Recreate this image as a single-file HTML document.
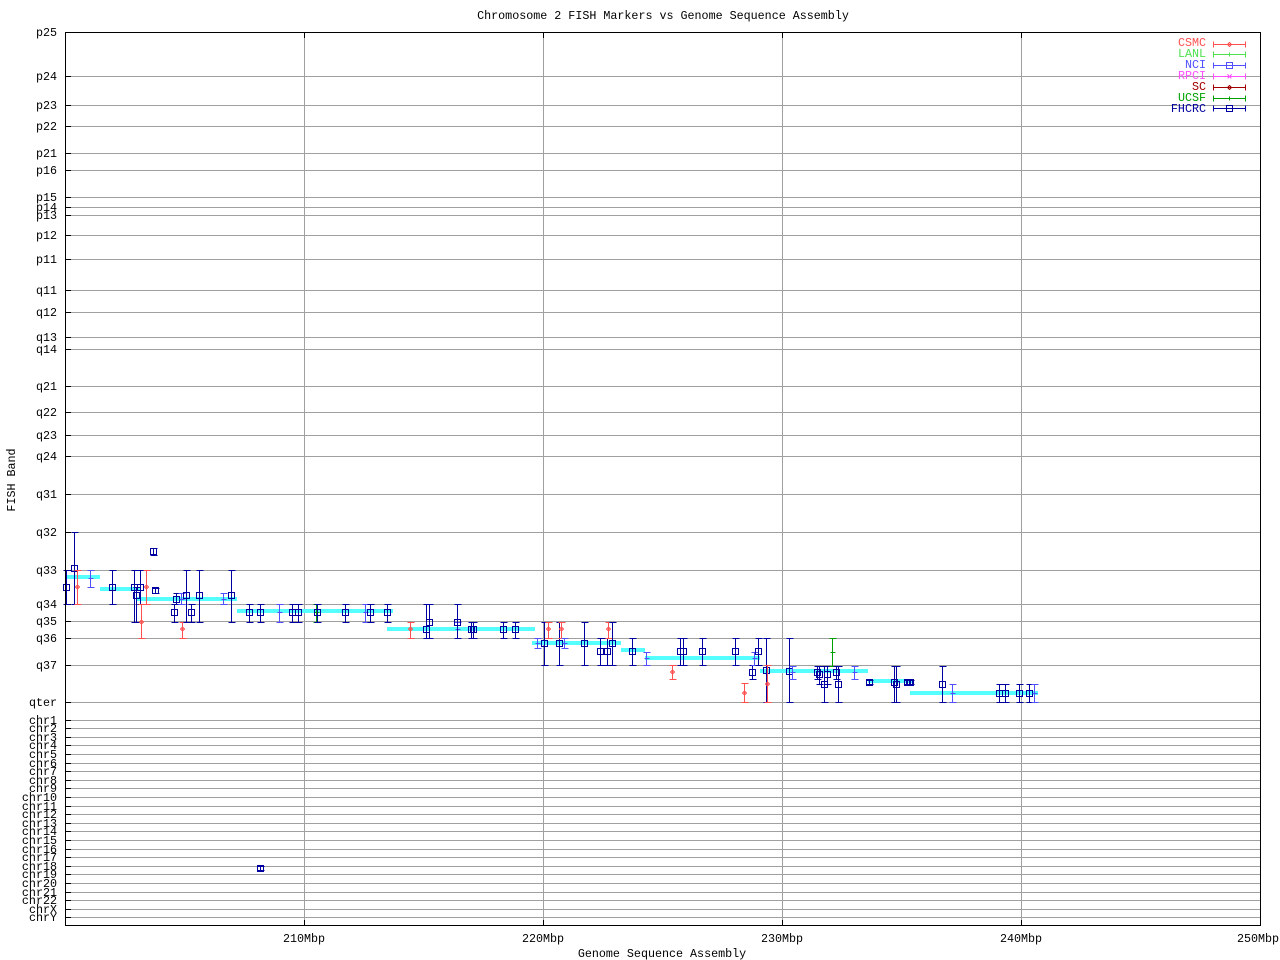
<!DOCTYPE html>
<html><head><meta charset="utf-8"><style>
html,body{margin:0;padding:0;background:#fff;}
svg{display:block;}
text{font-family:"Liberation Mono","DejaVu Sans Mono",monospace;font-size:11.7px;}
</style></head><body>
<svg id="s" width="1280" height="960" xmlns="http://www.w3.org/2000/svg" shape-rendering="crispEdges">
<g id="grid" stroke="#a0a0a0" stroke-width="1"></g>
<g id="ylab" text-anchor="end" fill="#000"></g>
<g id="bars" fill="#55ffff"></g>
<g id="data" fill="none" stroke-width="1"></g>
<rect x="65.5" y="32.5" width="1195" height="893" fill="none" stroke="#000"/>
<text x="663" y="19" text-anchor="middle">Chromosome 2 FISH Markers vs Genome Sequence Assembly</text>
<text x="304" y="942" text-anchor="middle">210Mbp</text>
<text x="543" y="942" text-anchor="middle">220Mbp</text>
<text x="782" y="942" text-anchor="middle">230Mbp</text>
<text x="1021" y="942" text-anchor="middle">240Mbp</text>
<text x="1258" y="942" text-anchor="middle">250Mbp</text>
<text x="662" y="957" text-anchor="middle">Genome Sequence Assembly</text>
<text transform="translate(15,480) rotate(-90)" text-anchor="middle">FISH Band</text>
<g text-anchor="end">
<text x="1206" y="46" fill="#ff5050">CSMC</text>
<text x="1206" y="57" fill="#50e050">LANL</text>
<text x="1206" y="68" fill="#5050ff">NCI</text>
<text x="1206" y="79" fill="#ff50ff">RPCI</text>
<text x="1206" y="90" fill="#a00000">SC</text>
<text x="1206" y="101" fill="#00a000">UCSF</text>
<text x="1206" y="112" fill="#0000a0">FHCRC</text>
</g>
<g id="leg" fill="none"></g>
</svg>
<script>
var NS="http://www.w3.org/2000/svg";
function el(p,t,a){var e=document.createElementNS(NS,t);for(var k in a)e.setAttribute(k,a[k]);document.getElementById(p).appendChild(e);return e;}
var ys=[["p24",76],["p23",105],["p22",126],["p21",153],["p16",170],["p15",197],["p14",207],["p13",215],["p12",235],["p11",259],["q11",290],["q12",312],["q13",337],["q14",349],["q21",386],["q22",412],["q23",435],["q24",456],["q31",494],["q32",532],["q33",570],["q34",604],["q35",621],["q36",638],["q37",665],["qter",702],["chr1",720],["chr2",728],["chr3",737],["chr4",745],["chr5",754],["chr6",763],["chr7",771],["chr8",780],["chr9",788],["chr10",797],["chr11",806],["chr12",814],["chr13",823],["chr14",831],["chr15",840],["chr16",849],["chr17",857],["chr18",866],["chr19",874],["chr20",883],["chr21",892],["chr22",900],["chrX",909],["chrY",917]];
var t=el("ylab","text",{x:57,y:36});t.textContent="p25";
ys.forEach(function(v){el("grid","line",{x1:65,x2:1260,y1:v[1]+.5,y2:v[1]+.5});el("grid","line",{x1:65,x2:71,y1:v[1]+.5,y2:v[1]+.5,stroke:"#000"});var t=el("ylab","text",{x:57,y:v[1]+4});t.textContent=v[0];});
[304,543,782,1021].forEach(function(x){el("grid","line",{x1:x+.5,x2:x+.5,y1:32,y2:926});el("grid","line",{x1:x+.5,x2:x+.5,y1:920,y2:926,stroke:"#000"});el("grid","line",{x1:x+.5,x2:x+.5,y1:32,y2:38,stroke:"#000"});});
[[65,100,577],[100,140,589],[137,237,599],[237,393,611],[387,535,629],[532,621,643],[621,645,650],[645,760,658],[760,868,671],[868,913,681],[910,1038,693]].forEach(function(b){el("bars","rect",{x:b[0],y:b[2]-2,width:b[1]-b[0],height:4});});
var C={b:"#0000a0",r:"#ff5050",l:"#5050ff",g:"#00a000",k:"#a00000"};
var D=[[66,570,587,604,"b"],[74,532,568,604,"b"],[77,570,587,604,"r"],[90,570,578,587,"l"],[112,570,587,604,"b"],[134,570,587,622,"b"],[136,587,595,622,"b"],[140,570,587,604,"b"],[141,604,622,638,"r"],[146,570,587,604,"r"],[153,548,551,555,"b"],[155,588,590,593,"b"],[174,604,612,622,"b"],[176,593,599,604,"b"],[181,593,599,604,"l"],[182,622,629,638,"r"],[186,570,595,622,"b"],[191,604,612,622,"b"],[199,570,595,622,"b"],[223,593,599,604,"l"],[231,570,595,622,"b"],[249,604,612,622,"b"],[260,604,612,622,"b"],[279,604,612,622,"l"],[292,604,612,622,"b"],[298,604,612,622,"b"],[316,604,612,622,"g"],[317,604,612,622,"b"],[345,604,612,622,"b"],[365,604,612,622,"l"],[370,604,612,622,"b"],[387,604,612,622,"b"],[410,622,629,638,"r"],[426,604,629,638,"b"],[429,604,622,638,"b"],[457,622,629,638,"l"],[457,604,622,638,"b"],[471,622,629,638,"b"],[473,622,629,638,"b"],[503,622,629,638,"b"],[515,622,629,638,"b"],
[537,638,643,648,"l"],[544,622,643,665,"b"],[548,622,629,638,"r"],[559,622,643,665,"b"],[561,622,629,638,"r"],[564,638,643,648,"l"],[584,622,643,665,"b"],[600,638,651,665,"b"],[607,638,651,665,"b"],[608,622,629,638,"r"],[612,622,643,665,"b"],[632,638,651,665,"b"],[646,652,658,665,"l"],[672,665,672,679,"r"],[680,638,651,665,"b"],[683,638,651,665,"b"],[702,638,651,665,"b"],[735,638,651,665,"b"],[744,683,693,702,"r"],[752,665,672,679,"b"],[754,652,658,665,"l"],[758,638,651,665,"b"],[766,638,670,702,"b"],[767,665,684,702,"r"],[789,638,671,702,"b"],[792,666,672,679,"l"],[817,666,672,679,"b"],[819,666,674,684,"b"],[824,666,684,702,"b"],[827,666,674,684,"b"],[832,638,652,666,"g"],[836,666,672,679,"b"],[838,666,684,702,"b"],[854,666,672,679,"l"],[869,680,682,684,"b"],[894,666,682,702,"b"],[896,666,684,702,"b"],[907,680,682,684,"b"],[909,680,682,684,"b"],[910,680,682,684,"b"],[942,666,684,702,"b"],[952,684,693,702,"l"],[999,684,693,702,"b"],[1005,684,693,702,"b"],[1019,684,693,702,"b"],[1029,684,693,702,"b"],[1034,684,693,702,"l"],[260,866,868,870,"b"]];
D.forEach(function(d){var c=C[d[4]],x=d[0]+.5;
el("data","line",{x1:x,x2:x,y1:d[1],y2:d[3],stroke:c});
el("data","line",{x1:x-3,x2:x+4,y1:d[1]+.5,y2:d[1]+.5,stroke:c});
el("data","line",{x1:x-3,x2:x+4,y1:d[3]+.5,y2:d[3]+.5,stroke:c});
if(d[4]=="b")el("data","rect",{x:x-3,y:d[2]-2.5,width:6,height:6,stroke:c});
else if(d[4]=="r")el("data","path",{d:"M"+(x-2)+" "+d[2]+"l2 -2l2 2l-2 2z",stroke:c});
else el("data","line",{x1:x-2,x2:x+3,y1:d[2]+.5,y2:d[2]+.5,stroke:c});});
var L=[["#ff5050","d"],["#50e050","t"],["#5050ff","s"],["#ff50ff","x"],["#a00000","d"],["#00a000","t"],["#0000a0","s"]];
L.forEach(function(l,i){var y=43.5+i*10.8,c=l[0];y=Math.round(y)+.5;
el("leg","line",{x1:1213,x2:1246,y1:y,y2:y,stroke:c});
el("leg","line",{x1:1213.5,x2:1213.5,y1:y-3,y2:y+3,stroke:c});
el("leg","line",{x1:1245.5,x2:1245.5,y1:y-3,y2:y+3,stroke:c});
var m=1229.5;
if(l[1]=="s")el("leg","rect",{x:m-3,y:y-3,width:6,height:6,stroke:c});
else if(l[1]=="d")el("leg","path",{d:"M"+(m-2)+" "+y+"l2 -2l2 2l-2 2z",stroke:c});
else if(l[1]=="x")el("leg","path",{d:"M"+(m-2)+" "+(y-2)+"l4 4M"+(m+2)+" "+(y-2)+"l-4 4",stroke:c});
else el("leg","line",{x1:m,x2:m,y1:y-2,y2:y+2,stroke:c});});
</script>
</body></html>
